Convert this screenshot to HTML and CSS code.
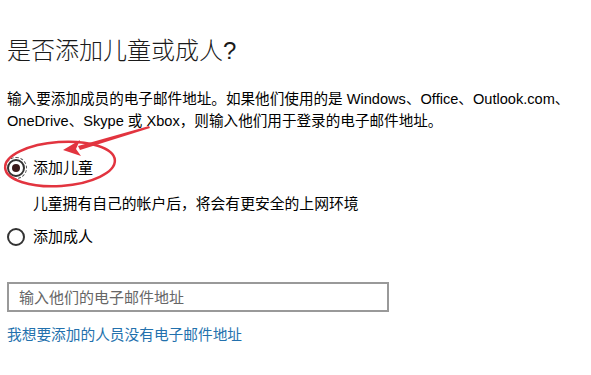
FILE: index.html
```html
<!DOCTYPE html>
<html>
<head>
  <title>添加儿童或成人</title>
  <link rel="stylesheet" href="styles.css">
</head>
<body>
  <main class="page">
    <h1 class="title">是否添加儿童或成人?</h1>
    <p class="intro">
      <span class="line">输入要添加成员的电子邮件地址。如果他们使用的是 Windows、Office、Outlook.com、</span>
      <span class="line">OneDrive、Skype 或 Xbox，则输入他们用于登录的电子邮件地址。</span>
    </p>

    <div class="choice choice-first">
      <span class="radio checked"></span>
      <span class="choice-label">添加儿童</span>
    </div>
    <p class="choice-note">儿童拥有自己的帐户后，将会有更安全的上网环境</p>
    <div class="choice">
      <span class="radio"></span>
      <span class="choice-label">添加成人</span>
    </div>

    <input class="email" type="text" placeholder="输入他们的电子邮件地址">
    <a class="no-email" href="#">我想要添加的人员没有电子邮件地址</a>
  </main>

  <!-- red hand-drawn markup over the first option -->
  <svg class="markup" width="591" height="375" viewBox="0 0 591 375">
    <ellipse cx="60" cy="164" rx="55" ry="22" transform="rotate(-4 60 164)" fill="none" stroke="#e2343f" stroke-width="2.5"/>
    <polygon points="149,126 150,128 80,150 78,146" fill="#e2343f"/>
    <polygon points="63,150 80,140 76,149 81,156" fill="#e2343f"/>
  </svg>
</body>
</html>
```

FILE: styles.css
```css
body {
  margin: 0;
  background-color: #fff;
  color: #000;
  font-family: "Liberation Sans", "Noto Sans CJK SC", sans-serif;
  font-size: 15px;
}

.page {
  padding: 0 7px;
}

.title {
  margin: 37px 0 0;
  font-size: 24px;
  font-weight: 300;
  line-height: 28px;
  color: #1a1a1a;
}

.intro {
  margin: 23px 0 0;
  font-size: 14.6px;
  line-height: 22px;
}

.intro .line {
  display: block;
  white-space: nowrap;
}

.choice {
  display: flex;
  align-items: center;
  margin-top: 11px;
  line-height: 22px;
}

.choice-first {
  margin-top: 25px;
}

.radio {
  width: 14px;
  height: 14px;
  border: 2px solid #333;
  border-radius: 50%;
  margin-right: 8px;
  display: flex;
  align-items: center;
  justify-content: center;
}

.radio.checked {
  outline: 1px dashed #555;
  outline-offset: 1px;
}

.radio.checked::after {
  content: "";
  width: 8px;
  height: 8px;
  border-radius: 50%;
  background-color: #3a1a1a;
}

.choice-note {
  margin: 14px 0 0 26px;
  font-size: 14.8px;
  line-height: 22px;
}

.email {
  display: block;
  width: 382px;
  height: 30px;
  margin-top: 34px;
  padding: 0 10px;
  box-sizing: border-box;
  border: 2px solid #999;
  font-family: inherit;
  font-size: 15px;
  outline: none;
}

.email::placeholder {
  color: #666;
}

.no-email {
  display: block;
  margin-top: 12px;
  font-size: 14.7px;
  line-height: 22px;
  color: #2371ad;
  text-decoration: none;
}

.markup {
  position: absolute;
  top: 0;
  left: 0;
  pointer-events: none;
}
```
